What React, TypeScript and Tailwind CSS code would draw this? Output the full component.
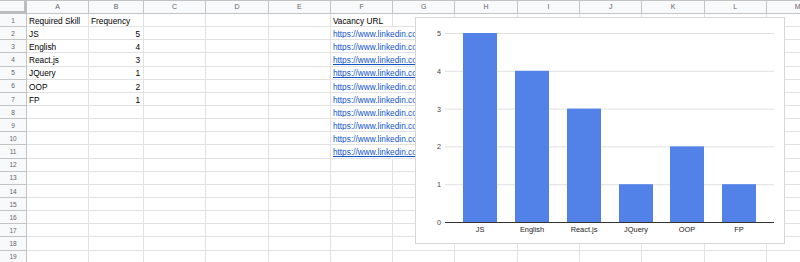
import React from 'react';

const columns = ['A', 'B', 'C', 'D', 'E', 'F', 'G', 'H', 'I', 'J', 'K', 'L', 'M'];

const skills: [string, number][] = [
  ['JS', 5],
  ['English', 4],
  ['React.js', 3],
  ['JQuery', 1],
  ['OOP', 2],
  ['FP', 1],
];

const urls = [
  'https://www.linkedin.com/jobs/view/3487120561',
  'https://www.linkedin.com/jobs/view/3490215874',
  'https://www.linkedin.com/jobs/view/3476531209',
  'https://www.linkedin.com/jobs/view/3481102347',
  'https://www.linkedin.com/jobs/view/3469958021',
  'https://www.linkedin.com/jobs/view/3492284416',
  'https://www.linkedin.com/jobs/view/3478840153',
  'https://www.linkedin.com/jobs/view/3485517732',
  'https://www.linkedin.com/jobs/view/3471106698',
  'https://www.linkedin.com/jobs/view/3493375520',
];

const ROWS = 19;

const cellText = (row: number, col: number) => {
  if (row === 1) {
    if (col === 0) return { text: 'Required Skill' };
    if (col === 1) return { text: 'Frequency' };
    if (col === 5) return { text: 'Vacancy URL' };
  }
  const s = skills[row - 2];
  if (s && col === 0) return { text: s[0] };
  if (s && col === 1) return { text: String(s[1]), right: true };
  const u = urls[row - 2];
  if (u && col === 5) return { text: u, link: true };
  return null;
};

const Chart = () => {
  const y0 = 204;
  const step = 37.8;
  const bars = [47, 99, 151, 203, 254, 306];
  return (
    <svg width="368" height="225" className="block">
      {[0, 1, 2, 3, 4, 5].map((v) => (
        <g key={v}>
          <line
            x1="29"
            x2="358"
            y1={y0 - v * step + 0.5}
            y2={y0 - v * step + 0.5}
            stroke={v === 0 ? '#333333' : '#e0e0e0'}
            strokeWidth="1"
          />
          <text
            x="25"
            y={y0 - v * step + 3}
            textAnchor="end"
            fontSize="7.2"
            fill="#444444"
            fontFamily="'Liberation Sans', Arial, sans-serif"
          >
            {v}
          </text>
        </g>
      ))}
      {skills.map(([name, v], i) => (
        <g key={name}>
          <rect x={bars[i]} y={y0 - v * step} width="34" height={v * step} fill="#5282e8" />
          <text
            x={bars[i] + 17}
            y="214"
            textAnchor="middle"
            fontSize="7.4"
            fill="#222222"
            fontFamily="'Liberation Sans', Arial, sans-serif"
          >
            {name}
          </text>
        </g>
      ))}
    </svg>
  );
};

export default function App() {
  return (
    <div className="relative w-[800px] h-[262px] overflow-hidden bg-white font-['Liberation_Sans',Arial,sans-serif]">
      <div className="grid grid-cols-[27px_62px_55px_repeat(11,62.3px)]">
        <div className="h-[14px] bg-[#f8f9fa] border-t border-[#c4c4c4] border-r-[3px] border-r-[#bdbdbd] border-b-[3px] border-b-[#bdbdbd]" />
        {columns.map((c) => (
          <div
            key={c}
            className="h-[14px] bg-[#f8f9fa] border-t border-r border-b border-[#c4c4c4] flex items-center justify-center text-[7px] text-[#5f6368]"
          >
            {c}
          </div>
        ))}
        {Array.from({ length: ROWS }, (_, r) => r + 1).map((row) => (
          <React.Fragment key={row}>
            <div className="h-[13.15px] bg-[#f8f9fa] border-r border-b border-[#c4c4c4] flex items-center justify-center pt-[1px] text-[6.5px] text-[#5f6368]">
              {row}
            </div>
            {columns.map((c, ci) => {
              const cell = cellText(row, ci);
              const hideRight = cell?.link;
              return (
                <div
                  key={c}
                  className={`h-[13.15px] border-b border-[#e2e2e2] flex items-end pb-[1px] px-[2px] text-[8.3px] leading-none whitespace-nowrap ${
                    hideRight ? 'border-r border-r-transparent' : 'border-r'
                  } ${cell?.right ? 'justify-end pr-[3px]' : ''}`}
                >
                  {cell &&
                    (cell.link ? (
                      <span className="block shrink-0 w-[82px] overflow-hidden text-[#1155cc] underline">{cell.text}</span>
                    ) : (
                      <span className="text-black">{cell.text}</span>
                    ))}
                </div>
              );
            })}
          </React.Fragment>
        ))}
      </div>
      <div className="absolute left-[415px] top-[17px] w-[370px] h-[227px] bg-white border border-[#d6d6d6]">
        <Chart />
      </div>
    </div>
  );
}
